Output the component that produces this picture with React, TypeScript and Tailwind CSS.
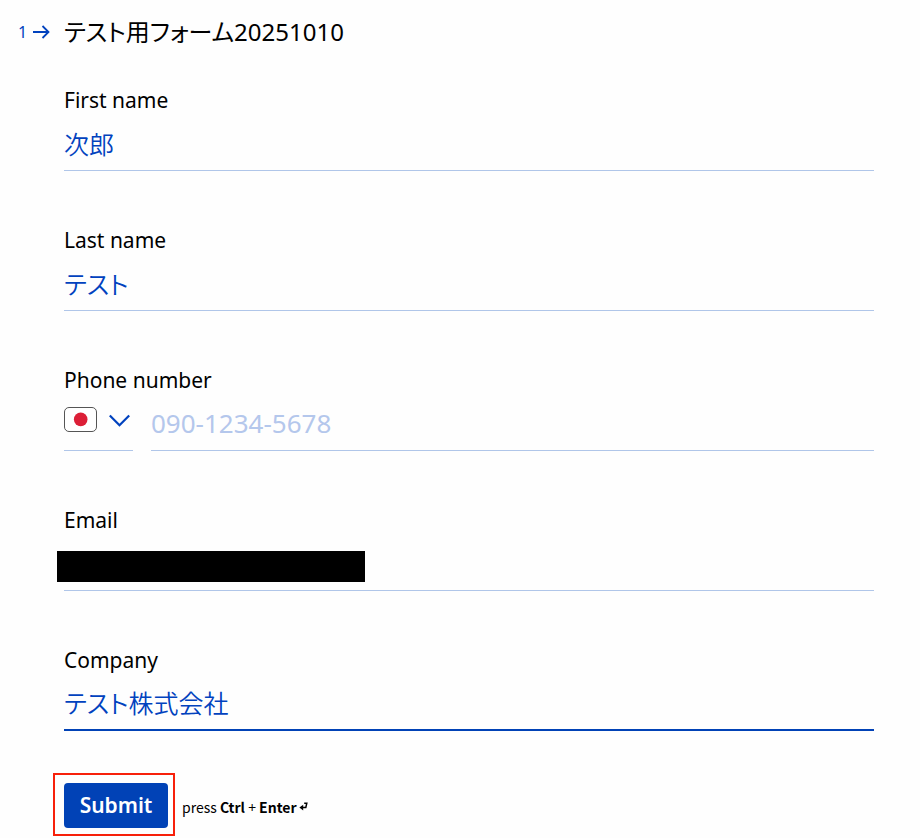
import React, { useState } from 'react';

interface TextFieldProps {
  id: string;
  label: string;
  value: string;
  onChange: (value: string) => void;
  active?: boolean;
  hidden?: boolean;
}

function TextField({ id, label, value, onChange, active, hidden }: TextFieldProps) {
  return (
    <div>
      <label htmlFor={id} className="block text-[21px] leading-[30px] text-black">
        {label}
      </label>
      <div className="relative">
        <input
          id={id}
          type="text"
          value={value}
          onChange={e => onChange(e.target.value)}
          className={`block h-14 w-full bg-transparent text-[25px] font-[350] text-[#0142be] outline-none ${
            active ? 'border-b-2 border-[#0142b6]' : 'border-b border-[#b0c6e9]'
          }`}
        />
        {hidden && <div className="absolute -left-[7px] top-4 h-[31px] w-[308px] bg-black" />}
      </div>
    </div>
  );
}

function JapanFlag() {
  return (
    <svg width="33" height="25" viewBox="0 0 33 25" aria-hidden="true">
      <rect x="0.5" y="0.5" width="32" height="24" rx="4.5" fill="#fff" stroke="#555" />
      <circle cx="16.7" cy="12.4" r="6.8" fill="#dc1f37" />
    </svg>
  );
}

function PhoneField() {
  const [country, setCountry] = useState('JP');
  const [phone, setPhone] = useState('');

  return (
    <div>
      <label htmlFor="phone" className="block text-[21px] leading-[30px] text-black">
        Phone number
      </label>
      <div className="flex gap-[18px]">
        <div className="relative flex h-14 w-[69px] shrink-0 items-center gap-3 border-b border-[#b0c6e9] pb-1.5">
          <JapanFlag />
          <svg width="22" height="14" viewBox="0 0 22 14" fill="none" stroke="#0142be" strokeWidth="2.2" aria-hidden="true">
            <path d="M0.8 2.5 10.5 12.2 20.2 2.5" />
          </svg>
          <select
            aria-label="Country"
            value={country}
            onChange={e => setCountry(e.target.value)}
            className="absolute inset-0 cursor-pointer opacity-0"
          >
            <option value="JP">+81</option>
          </select>
        </div>
        <input
          id="phone"
          type="tel"
          placeholder="090-1234-5678"
          value={phone}
          onChange={e => setPhone(e.target.value)}
          className="block h-14 w-full min-w-0 border-b border-[#b0c6e9] bg-transparent text-[26px] text-[#0142be] outline-none placeholder:text-[#b4c7ec]"
        />
      </div>
    </div>
  );
}

function App() {
  const [firstName, setFirstName] = useState('次郎');
  const [lastName, setLastName] = useState('テスト');
  const [email, setEmail] = useState('');
  const [company, setCompany] = useState('テスト株式会社');

  return (
    <main className="min-h-screen bg-[#fefefe] pl-[18px] pr-[46px] pt-3 font-['Noto_Sans','Noto_Sans_CJK_JP',sans-serif] [font-feature-settings:'palt']">
      <form onSubmit={e => e.preventDefault()}>
        {/* Question title */}
        <div className="flex items-center">
          <div className="flex w-[46px] shrink-0 items-center gap-1.5 text-base text-[#0142be]">
            <span>1</span>
            <svg width="17" height="14" viewBox="0 0 17 14" fill="none" stroke="currentColor" strokeWidth="1.8" aria-hidden="true">
              <path d="M0 7H15.5M9.5 1 15.5 7 9.5 13" />
            </svg>
          </div>
          <h1 className="text-2xl leading-10 text-black">テスト用フォーム20251010</h1>
        </div>

        {/* Fields */}
        <div className="ml-[46px] mt-[33px] space-y-[54px]">
          <TextField id="first-name" label="First name" value={firstName} onChange={setFirstName} />
          <TextField id="last-name" label="Last name" value={lastName} onChange={setLastName} />
          <PhoneField />
          <TextField id="email" label="Email" value={email} onChange={setEmail} hidden />
          <TextField id="company" label="Company" value={company} onChange={setCompany} active />
        </div>

        {/* Submit */}
        <div className="ml-[35px] mt-[42px] flex items-center gap-[7px]">
          <div className="border-2 border-[#f7200a] pb-[6px] pl-[9px] pr-[5px] pt-2">
            <button type="submit" className="block h-[45px] w-[104px] rounded bg-[#0142b6] text-[21px] font-semibold text-white">
              Submit
            </button>
          </div>
          <p className="flex items-center gap-0.5 pt-1 font-['Noto_Sans_CJK_JP',sans-serif] text-sm text-black">
            <span>
              press <strong>Ctrl</strong> + <strong>Enter</strong>
            </span>
            <svg width="9" height="9" viewBox="0 0 9 9" aria-hidden="true">
              <path d="M5.2 1.2H7.8L6.8 5.6H3.2" fill="none" stroke="#000" strokeWidth="1.5" />
              <path d="M0.4 5.6 4.2 2.8V8.4Z" fill="#000" />
            </svg>
          </p>
        </div>
      </form>
    </main>
  );
}

export default App;
